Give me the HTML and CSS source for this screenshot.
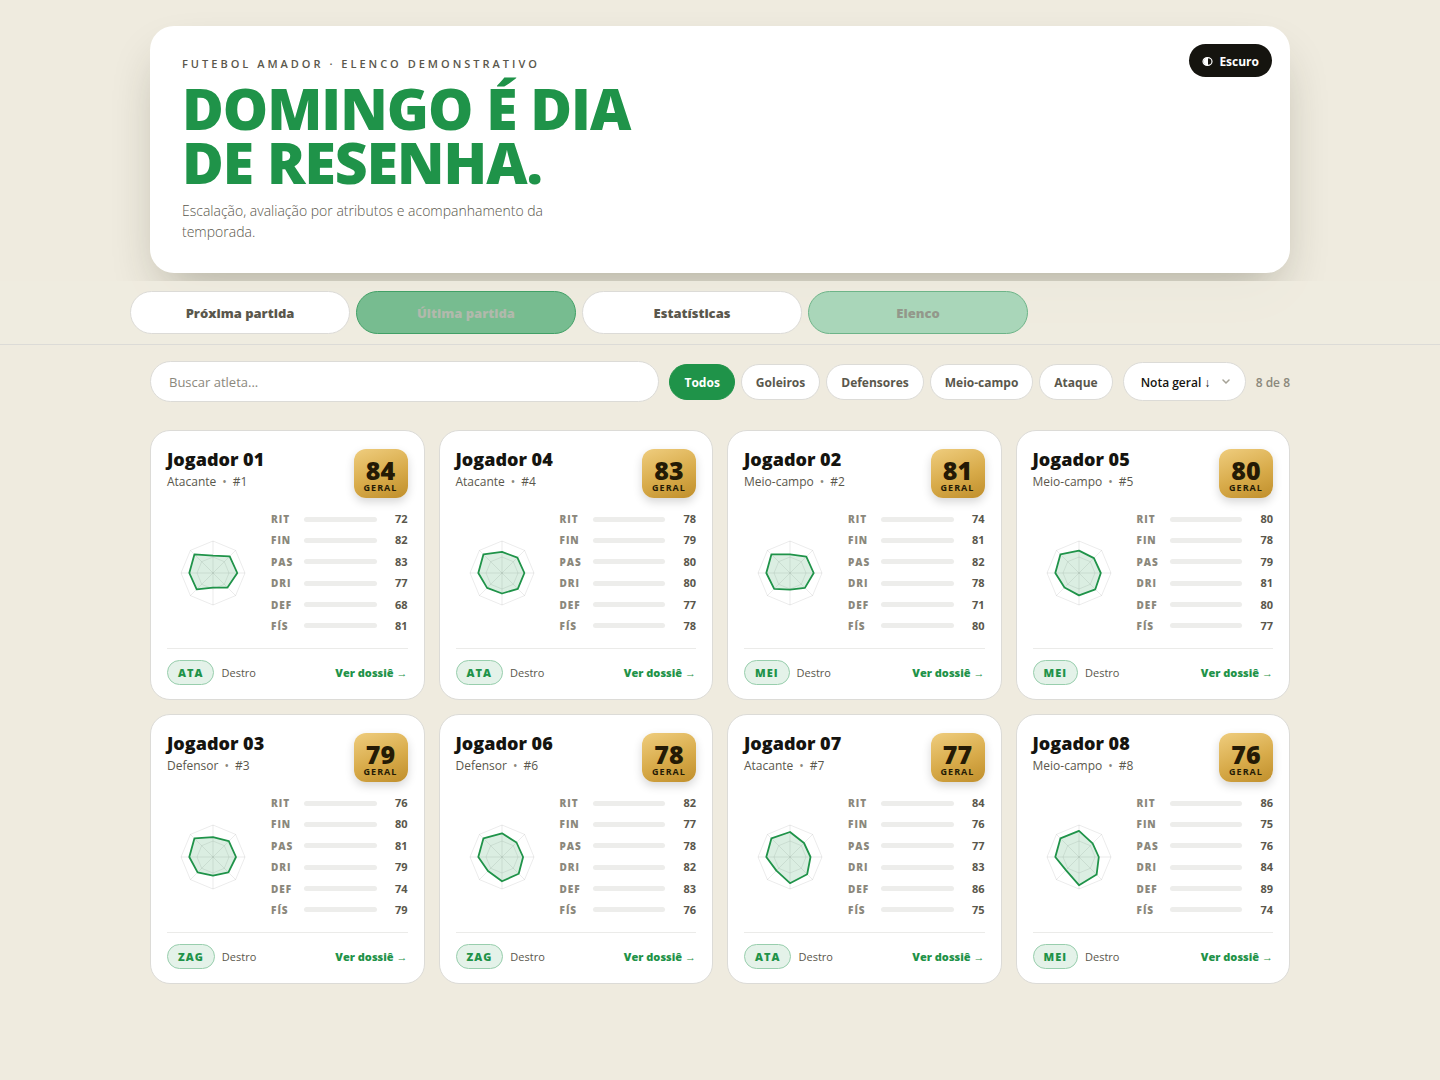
FILE: index.html
```
<!DOCTYPE html>
<html lang="pt-BR">
<head>
    <meta charset="UTF-8">
    <meta name="viewport" content="width=device-width, initial-scale=1.0">
    <title>Domingo é dia de resenha</title>
    <link rel="stylesheet" href="styles.css">
</head>
<body>
    <header class="hero">
        <div class="hero-text">
            <p class="eyebrow">Futebol amador · Elenco demonstrativo</p>
            <h1>Domingo é dia<br>de resenha.</h1>
            <p class="lead">Escalação, avaliação por atributos e acompanhamento da temporada.</p>
        </div>
        <button class="theme-toggle" type="button">
            <svg width="11" height="9" viewBox="0 0 11 9" aria-hidden="true">
                <ellipse cx="5.5" cy="4.5" rx="4.5" ry="3.8" fill="none" stroke="#fff" stroke-width="1.2"/>
                <path d="M6 .5A4.5 4 0 0 0 6 8.500z" fill="#fff"/>
            </svg>
            Escuro
        </button>
    </header>

    <nav class="tabs">
        <div class="tabs-inner">
            <button class="tab" type="button">Próxima partida</button>
            <button class="tab tab-leaving" type="button">Última partida</button>
            <button class="tab" type="button">Estatísticas</button>
            <button class="tab tab-entering" type="button">Elenco</button>
        </div>
    </nav>

    <main class="page">
        <div class="toolbar">
            <input class="search" type="search" placeholder="Buscar atleta..." aria-label="Buscar atleta">
            <div class="filters">
                <button class="chip active" type="button">Todos</button>
                <button class="chip" type="button">Goleiros</button>
                <button class="chip" type="button">Defensores</button>
                <button class="chip" type="button">Meio-campo</button>
                <button class="chip" type="button">Ataque</button>
            </div>
            <div class="sort">
                <select aria-label="Ordenar">
                    <option>Nota geral ↓</option>
                </select>
                <svg class="sort-arrow" width="8" height="6" viewBox="0 0 8 6" aria-hidden="true">
                    <path d="M1 1l3 3 3-3" fill="none" stroke="#a5a296" stroke-width="1.5" stroke-linecap="round"/>
                </svg>
            </div>
            <span class="count">8 de 8</span>
        </div>
        <div class="grid" id="grid"></div>
    </main>

    <script src="script.js"></script>
</body>
</html>
```

FILE: styles.css
```
:root {
    --bg: #efebdf;
    --card: #ffffff;
    --line: #dcdbd7;
    --text: #15140f;
    --text-2: #5a574c;
    --muted: #8b887c;
    --green: #1f9349;
}

* {
    box-sizing: border-box;
}

body {
    margin: 0;
    padding-top: 26px;
    background: var(--bg);
    color: var(--text);
    font-family: "Open Sans", "Noto Sans", sans-serif;
    font-size: 14px;
}

button,
input,
select {
    font-family: inherit;
}

button {
    cursor: pointer;
}

.hero,
.page {
    width: calc(100% - 40px);
    max-width: 1140px;
    margin: 0 auto;
}

/* cabeçalho */
.hero {
    display: flex;
    justify-content: space-between;
    align-items: flex-start;
    padding: 18px 18px 31px 32px;
    background: var(--card);
    border-radius: 24px;
    box-shadow: 0 24px 50px -14px rgba(40, 40, 20, 0.32);
}

.hero-text {
    padding-top: 12px;
}

.eyebrow {
    margin: 0;
    color: var(--text-2);
    font-size: 11px;
    font-weight: 600;
    line-height: 16px;
    letter-spacing: 3px;
    text-transform: uppercase;
}

h1 {
    margin: 9px 0 11px;
    color: var(--green);
    font-size: 57px;
    font-weight: 800;
    line-height: 54px;
    letter-spacing: -1px;
    text-transform: uppercase;
}

.lead {
    max-width: 400px;
    margin: 0;
    color: var(--text-2);
    font-size: 14px;
    font-weight: 350;
    line-height: 21px;
}

.theme-toggle {
    display: flex;
    align-items: center;
    gap: 6px;
    height: 33px;
    padding: 1px 13px 0;
    border: 0;
    border-radius: 17px;
    background: var(--text);
    color: #fff;
    font-size: 12px;
    font-weight: 700;
}

/* abas */
.tabs {
    position: relative;
    margin-top: 8px;
    padding: 10px 0;
    border-bottom: 1px solid var(--line);
    background: rgba(239, 235, 223, 0.92);
}

.tabs-inner {
    display: grid;
    grid-template-columns: repeat(4, 220px);
    gap: 6px;
    width: 100%;
    max-width: 1180px;
    margin: 0 auto;
}

.tab {
    height: 43px;
    border: 1px solid var(--line);
    border-radius: 22px;
    background: var(--card);
    color: var(--text-2);
    font-size: 13px;
    font-weight: 800;
}

.tab-leaving {
    border-color: #41a066;
    background: #77bc90;
    color: #b1b9ac;
}

.tab-entering {
    border-color: #6db488;
    background: #a9d6b9;
    color: #93988b;
}

/* filtros */
.toolbar {
    display: flex;
    align-items: center;
    gap: 10px;
    padding: 16px 0 28px;
}

.search {
    flex: 1;
    min-width: 0;
    height: 41px;
    padding: 0 18px;
    border: 1px solid var(--line);
    border-radius: 21px;
    background: var(--card);
    font-size: 13px;
}

.search::placeholder {
    color: var(--muted);
}

.filters {
    display: flex;
    gap: 6px;
}

.chip {
    height: 36px;
    padding: 1px 14px 0;
    border: 1px solid var(--line);
    border-radius: 18px;
    background: var(--card);
    color: var(--text-2);
    font-size: 12px;
    font-weight: 700;
}

.chip.active {
    border-color: var(--green);
    background: var(--green);
    color: #fff;
}

.sort {
    position: relative;
}

.sort select {
    width: 123px;
    height: 39px;
    padding: 1px 17px 0;
    border: 1px solid var(--line);
    border-radius: 20px;
    background: var(--card);
    color: var(--text);
    font-size: 12px;
    font-weight: 600;
    appearance: none;
}

.sort-arrow {
    position: absolute;
    top: 17px;
    right: 16px;
    pointer-events: none;
}

.count {
    padding-top: 1px;
    color: var(--muted);
    font-size: 12px;
    font-weight: 600;
}

/* cards */
.grid {
    display: grid;
    grid-template-columns: repeat(4, 1fr);
    gap: 14px;
    padding-bottom: 40px;
}

.card {
    padding: 18px 16px 14px;
    border: 1px solid var(--line);
    border-radius: 20px;
    background: var(--card);
}

.card-head {
    display: flex;
    justify-content: space-between;
}

.card h2 {
    margin: 0;
    font-size: 18px;
    font-weight: 800;
    line-height: 20px;
}

.meta {
    display: flex;
    gap: 6px;
    margin: 4px 0 0;
    color: var(--text-2);
    font-size: 12px;
    font-weight: 500;
    line-height: 18px;
}

.meta i {
    color: var(--muted);
    font-style: normal;
}

.overall {
    display: flex;
    flex-direction: column;
    align-items: center;
    width: 54px;
    height: 49px;
    padding-top: 10px;
    border-radius: 12px;
    background: linear-gradient(160deg, #efcd7e, #d8ab4a 55%, #c08f2c);
    box-shadow: 0 4px 10px rgba(0, 0, 0, 0.16);
    color: #241a05;
}

.overall strong {
    font-size: 25px;
    font-weight: 800;
    line-height: 22px;
}

.overall span {
    font-size: 9px;
    font-weight: 700;
    line-height: 14px;
    letter-spacing: 1px;
}

.card-body {
    display: grid;
    grid-template-columns: 92px 1fr;
    gap: 12px;
    align-items: center;
    padding: 12px 0 13px;
}

.radar {
    display: block;
    width: 92px;
    height: 92px;
}

.radar .ring,
.radar .axis {
    fill: none;
    stroke: rgba(0, 0, 0, 0.08);
}

.radar .shape {
    fill: rgba(31, 147, 73, 0.16);
    stroke: var(--green);
    stroke-width: 1.8;
    stroke-linejoin: round;
}

.stats {
    display: grid;
    align-content: space-between;
    height: 125px;
    margin: 0;
    padding: 0;
    list-style: none;
}

.stats li {
    display: grid;
    grid-template-columns: 25px 1fr 23px;
    gap: 8px;
    align-items: center;
    line-height: 18px;
}

.stat-name {
    color: var(--muted);
    font-size: 10px;
    font-weight: 800;
    letter-spacing: 1px;
}

.track {
    height: 5px;
    border-radius: 3px;
    background: #ededeb;
}

.stat-value {
    color: var(--text-2);
    font-size: 11px;
    font-weight: 700;
    text-align: right;
}

.card-foot {
    display: flex;
    align-items: center;
    gap: 7px;
    padding-top: 11px;
    border-top: 1px solid #ebebe9;
}

.position {
    padding: 0 10px;
    border: 1px solid #98cead;
    border-radius: 13px;
    background: #e4f2e9;
    color: var(--green);
    font-size: 11px;
    font-weight: 800;
    line-height: 23px;
    letter-spacing: 1px;
}

.foot {
    color: var(--text-2);
    font-size: 11px;
}

.details {
    margin-left: auto;
    color: var(--green);
    font-size: 11px;
    font-weight: 800;
    text-decoration: none;
}

@media (max-width: 1000px) {
    .grid {
        grid-template-columns: repeat(2, 1fr);
    }

    .tabs-inner {
        grid-template-columns: repeat(4, 1fr);
    }

    .toolbar {
        flex-wrap: wrap;
    }
}
```

FILE: script.js
```
const labels = ['RIT', 'FIN', 'PAS', 'DRI', 'DEF', 'FÍS'];

// attrs: RIT, FIN, PAS, DRI, DEF, FÍS
const players = [
    { num: 1, role: 'Atacante', pos: 'ATA', overall: 84, attrs: [72, 82, 83, 77, 68, 81] },
    { num: 4, role: 'Atacante', pos: 'ATA', overall: 83, attrs: [78, 79, 80, 80, 77, 78] },
    { num: 2, role: 'Meio-campo', pos: 'MEI', overall: 81, attrs: [74, 81, 82, 78, 71, 80] },
    { num: 5, role: 'Meio-campo', pos: 'MEI', overall: 80, attrs: [80, 78, 79, 81, 80, 77] },
    { num: 3, role: 'Defensor', pos: 'ZAG', overall: 79, attrs: [76, 80, 81, 79, 74, 79] },
    { num: 6, role: 'Defensor', pos: 'ZAG', overall: 78, attrs: [82, 77, 78, 82, 83, 76] },
    { num: 7, role: 'Atacante', pos: 'ATA', overall: 77, attrs: [84, 76, 77, 83, 86, 75] },
    { num: 8, role: 'Meio-campo', pos: 'MEI', overall: 76, attrs: [86, 75, 76, 84, 89, 74] }
];

function point(i, r) {
    const angle = Math.PI / 4 * i - Math.PI / 2;
    return (46 + r * Math.cos(angle)).toFixed(1) + ',' + (46 + r * Math.sin(angle)).toFixed(1);
}

function polygon(radii, cls) {
    return `<polygon class="${cls}" points="${radii.map((r, i) => point(i, r)).join(' ')}"/>`;
}

function radar(attrs) {
    const values = [...attrs, 82, 86];
    const axes = values.map((v, i) => `<path class="axis" d="M46,46L${point(i, 32)}"/>`).join('');
    return `<svg class="radar" viewBox="0 0 92 92" aria-hidden="true">
        ${polygon(Array(8).fill(32), 'ring')}
        ${polygon(Array(8).fill(16), 'ring')}
        ${axes}
        ${polygon(values.map(v => (v - 45) * 0.64), 'shape')}
    </svg>`;
}

document.getElementById('grid').innerHTML = players.map(p => `
    <article class="card">
        <div class="card-head">
            <div>
                <h2>Jogador 0${p.num}</h2>
                <p class="meta">${p.role} <i>•</i> #${p.num}</p>
            </div>
            <div class="overall"><strong>${p.overall}</strong><span>GERAL</span></div>
        </div>
        <div class="card-body">
            ${radar(p.attrs)}
            <ul class="stats">
                ${p.attrs.map((v, i) => `<li>
                    <span class="stat-name">${labels[i]}</span>
                    <span class="track"></span>
                    <span class="stat-value">${v}</span>
                </li>`).join('')}
            </ul>
        </div>
        <div class="card-foot">
            <span class="position">${p.pos}</span>
            <span class="foot">Destro</span>
            <a class="details" href="#">Ver dossiê →</a>
        </div>
    </article>`).join('');
```
